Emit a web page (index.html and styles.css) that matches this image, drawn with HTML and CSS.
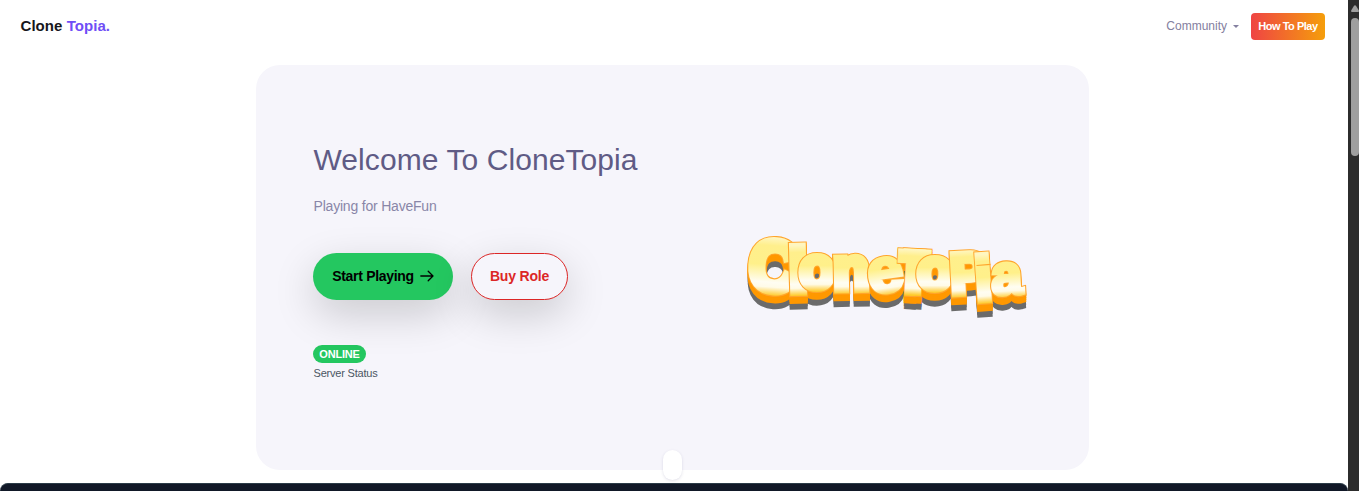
FILE: index.html
```html
<!DOCTYPE html>
<html lang="en">
<head>
<meta charset="utf-8">
<title>Clone Topia</title>
<link rel="stylesheet" href="styles.css">
</head>
<body>
<div class="window">
  <div class="page">
    <header class="navbar">
      <a class="brand">Clone <span class="brand-accent">Topia.</span></a>
      <nav class="menu">
        <a class="menu-link">Community<span class="caret"></span></a>
        <a class="how-to">How To Play</a>
      </nav>
    </header>
    <main class="hero">
      <section class="intro">
        <h1 class="title">Welcome To CloneTopia</h1>
        <p class="lead">Playing for HaveFun</p>
        <div class="actions">
          <a class="btn btn-start"><span class="start-label">Start Playing</span>
            <svg class="arrow" viewBox="0 0 14 12"><path d="M.8 6H13M8.2 1.3 13 6 8.2 10.7"/></svg>
          </a>
          <a class="btn btn-buy">Buy Role</a>
        </div>
        <div class="badge">ONLINE</div>
        <p class="status">Server Status</p>
      </section>
      <svg class="logo" viewBox="740 225 290 100" role="img" aria-label="CloneTopia">
        <defs>
          <linearGradient id="gold" x1="0" y1="0" x2="0" y2="1">
            <stop offset=".14" stop-color="#fff6c0"/>
            <stop offset=".24" stop-color="#ffef8c"/>
            <stop offset=".48" stop-color="#fff08a"/>
            <stop offset=".7" stop-color="#fffdf2"/>
            <stop offset=".76" stop-color="#fffbe8"/>
            <stop offset=".87" stop-color="#ffc928"/>
          </linearGradient>
          <text id="c1" class="glyph" transform="translate(749.5 290.5) rotate(4 20 -25) scale(.93 1)" font-size="71">C</text>
          <text id="l2" class="glyph" transform="translate(790 292) rotate(-1.5)" font-size="62">l</text>
          <text id="o3" class="glyph medium" transform="translate(799.5 288) scale(.95 1)" font-size="60">o</text>
          <text id="n4" class="glyph medium" transform="translate(833.5 290) rotate(-1) scale(.98 1)" font-size="60">n</text>
          <text id="e5" class="glyph thin" transform="translate(868 292) rotate(-8 16 -15) scale(1.03 1)" font-size="62">e</text>
          <g id="t6">
            <text class="glyph" transform="translate(898.5 291) rotate(3) scale(.68 1)" font-size="56">T</text>
            <text class="glyph" transform="translate(904 291) rotate(3) scale(.68 1)" font-size="56">T</text>
          </g>
          <text id="o7" class="glyph medium" transform="translate(917.5 289) scale(.98 1)" font-size="58">o</text>
          <text id="p8" class="glyph medium" transform="translate(951.5 294) rotate(-3) scale(.93 1)" font-size="57">P</text>
          <text id="i9" class="glyph" transform="translate(977.5 300) rotate(-4) scale(.87 1)" font-size="60">i</text>
          <text id="a10" class="glyph thin" transform="translate(992 295) rotate(-3) scale(.98 1)" font-size="57">a</text>
          <g id="word"><use href="#c1"/><use href="#l2"/><use href="#o3"/><use href="#n4"/><use href="#e5"/><use href="#t6"/><use href="#o7"/><use href="#p8"/><use href="#i9"/><use href="#a10"/></g>
        </defs>
        <g class="shadow"><use href="#word" y="13"/><use href="#word" y="10"/></g>
        <g class="side"><use href="#word" y="7"/><use href="#word" y="5"/><use href="#word" y="3"/><use href="#word" y="1"/></g>
        <use class="rim" href="#c1"/><use class="face" href="#c1"/>
        <use class="rim" href="#l2"/><use class="face" href="#l2"/>
        <use class="rim" href="#o3"/><use class="face" href="#o3"/>
        <use class="rim" href="#n4"/><use class="face" href="#n4"/>
        <use class="rim" href="#e5"/><use class="face" href="#e5"/>
        <use class="rim" href="#t6"/><use class="face" href="#t6"/>
        <use class="rim" href="#o7"/><use class="face" href="#o7"/>
        <use class="rim" href="#p8"/><use class="face" href="#p8"/>
        <use class="rim" href="#i9"/><use class="face" href="#i9"/>
        <path class="dot-gap" d="M976.5 265.5 990.5 264.3"/>
        <use class="rim" href="#a10"/><use class="face" href="#a10"/>
      </svg>
      <span class="scroll-pill"></span>
    </main>
    <section class="next"></section>
  </div>
  <div class="scrollbar">
    <svg class="scroll-up" viewBox="0 0 8 7"><path d="M3 .8Q4-.5 5 .8L8 5.8Q8 7 7 7H1Q0 7 0 5.8Z"/></svg>
    <div class="thumb"></div>
  </div>
</div>
</body>
</html>
```

FILE: styles.css
```css
* { box-sizing: border-box; }
body {
  margin: 0;
  overflow: hidden;
  background: #fff;
  font-family: "Liberation Sans", Arial, sans-serif;
}
h1, p { margin: 0; font-weight: 400; }
a, h1, p, .badge { white-space: nowrap; }
.window { display: flex; height: 491px; }
.page { flex: 1; display: flex; flex-direction: column; min-width: 0; }
.navbar {
  height: 65px;
  padding: 13px 23px 0 20.5px;
  display: flex;
  justify-content: space-between;
  align-items: flex-start;
}
.brand { font-size: 15px; line-height: 26px; font-weight: 700; color: #16161c; letter-spacing: .05px; }
.brand-accent { color: #6f4ef6; }
.menu { display: flex; align-items: center; gap: 12px; }
.menu-link {
  display: flex;
  align-items: center;
  gap: 6px;
  font-size: 12px;
  line-height: 27px;
  color: #8480a0;
}
.caret { border: 3px solid transparent; border-top-color: #8480a0; border-bottom: 0; }
.how-to {
  width: 74px;
  height: 27px;
  border-radius: 4px;
  background: linear-gradient(90deg, #ef4444, #f59e0b);
  color: #fff;
  font-size: 11px;
  font-weight: 700;
  line-height: 27px;
  text-align: center;
  letter-spacing: -.48px;
}
.hero {
  position: relative;
  width: 833px;
  height: 405px;
  margin-left: 256px;
  padding: 76px 57px 0;
  border-radius: 24px;
  background: #f6f5fb;
  display: flex;
}
.intro { width: 427px; }
.title { padding-left: .5px; font-size: 30px; line-height: 38px; color: #5f5b85; letter-spacing: .08px; }
.lead { padding-left: .5px; margin-top: 18px; font-size: 14px; line-height: 18px; color: #8986a8; letter-spacing: -.2px; }
.actions { display: flex; gap: 18px; margin-top: 38px; }
.btn {
  height: 47px;
  padding-bottom: 1px;
  border-radius: 24px;
  display: flex;
  align-items: center;
  justify-content: center;
  font-size: 14px;
  font-weight: 700;
  letter-spacing: -.3px;
  box-shadow: 0 14px 42px rgba(0, 0, 0, .18);
}
.btn-start { width: 140px; gap: 6px; background: #24c760; color: #000; }
.btn-buy {
  width: 97px;
  border: 1px solid #dc2626;
  background: #f6f5fb;
  color: #dc2626;
  letter-spacing: -.2px;
}
.arrow { width: 14px; height: 12px; fill: none; stroke: #000; stroke-width: 1.3; stroke-linecap: round; stroke-linejoin: round; }
.badge {
  width: 53px;
  height: 18px;
  margin-top: 45px;
  border-radius: 9px;
  background: #24c760;
  color: #fff;
  font-size: 11px;
  font-weight: 700;
  line-height: 18px;
  text-align: center;
  letter-spacing: -.2px;
}
.status { padding-left: .5px; margin-top: 3px; font-size: 11px; line-height: 14px; color: #4b5563; letter-spacing: -.2px; }
.logo {
  flex: none;
  width: 290px;
  height: 100px;
  margin-top: 84px;
  overflow: visible;
  font-family: "Liberation Sans", Arial, sans-serif;
  font-weight: 700;
  stroke-linejoin: miter;
  stroke-miterlimit: 2;
}
.glyph { stroke-width: var(--weight); }
.medium { stroke-width: calc(var(--weight) - 1.2px); }
.thin { stroke-width: calc(var(--weight) - 4px); }
.shadow { fill: #6b6b6b; stroke: #6b6b6b; --weight: 9.5px; }
.side { fill: #ff9800; stroke: #ff9800; --weight: 9.8px; }
.rim { fill: #ffa52c; stroke: #ffa52c; --weight: 10.4px; }
.face { fill: url(#gold); stroke: url(#gold); --weight: 8.2px; }
.dot-gap { fill: none; stroke: #ffa52c; stroke-width: 1.2px; }
.scroll-pill {
  position: absolute;
  left: 407px;
  bottom: -10px;
  width: 19px;
  height: 30px;
  border-radius: 10px;
  background: #fff;
  box-shadow: 0 1px 3px rgba(70, 60, 120, .16);
}
.next {
  flex: 1;
  margin-top: 13px;
  border-radius: 8px 8px 0 0;
  border-top: 1px solid #2c3c48;
  background: #111827;
}
.scrollbar {
  width: 11px;
  padding: 5px 0 0 3px;
  background: #2c2c2c;
}
.scroll-up { display: block; width: 8px; height: 7px; fill: #9f9f9f; }
.thumb { width: 8px; height: 138px; margin-top: 6px; border-radius: 4px; background: #9f9f9f; }
```
